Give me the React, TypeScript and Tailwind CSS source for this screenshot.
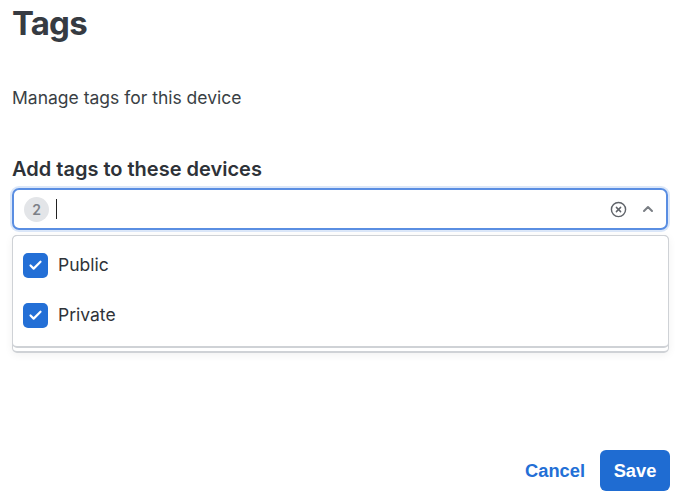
import { Check, ChevronUp, CircleX } from 'lucide-react';

const tags = ['Public', 'Private'];

export default function App() {
  return (
    <div className="w-[688px] h-[501px] bg-white flex flex-col pl-3 pr-5 font-['Inter',sans-serif] text-[#333840]">
      <h1 className="text-[33px] font-bold leading-none mt-[7px] tracking-tight text-[#363b42]">Tags</h1>
      <p className="text-[17.5px] mt-[45px] text-[#3a3f45]">Manage tags for this device</p>

      <label className="text-[20px] font-semibold mt-[45px] leading-[26px] text-[#2e3238]">Add tags to these devices</label>

      <div className="mt-[6px] h-[42px] rounded-[7px] border-2 border-[#5a8ee2] ring-2 ring-[#dbe7f9] flex items-center pl-[10px] pr-[10px]">
        <span className="w-[25px] h-[25px] rounded-full bg-[#e3e5e8] text-[#7c8087] text-[14px] font-semibold flex items-center justify-center">2</span>
        <span className="ml-[7px] w-px h-[20px] bg-[#222]" />
        <div className="flex-1" />
        <CircleX className="w-[17px] h-[17px] text-[#5f6369]" strokeWidth={2} />
        <ChevronUp className="w-[16px] h-[16px] text-[#7a7e84] ml-[13px]" strokeWidth={3} />
      </div>

      <div className="mt-[5px] mr-[-1px] rounded-[5px] border border-[#cfd2d6] border-b-2 shadow-[0_2px_8px_rgba(0,0,0,0.06)] pb-[3px]">
        <div className="rounded-[5px] border-b-2 border-[#cfd2d6] border-l border-r pt-[4px] pb-[6px] -mx-px -mt-px border-t">
          {tags.map((t) => (
            <div key={t} className="h-[50px] flex items-center px-[10px]">
              <span className="w-[25px] h-[25px] rounded-[5px] bg-[#236fd6] flex items-center justify-center">
                <Check className="w-[15px] h-[15px] text-white" strokeWidth={3.5} />
              </span>
              <span className="ml-[10px] text-[17.5px] text-[#2f3339]">{t}</span>
            </div>
          ))}
        </div>
      </div>

      <div className="flex-1" />
      <div className="flex justify-end items-center gap-[15px] mb-[10px] mr-[-2px] font-['Liberation_Sans',sans-serif] font-bold text-[18.3px]">
        <button className="text-[#236fd6]">Cancel</button>
        <button className="bg-[#1f6cd2] text-white rounded-[6px] w-[70px] h-[41px]">Save</button>
      </div>
    </div>
  );
}
